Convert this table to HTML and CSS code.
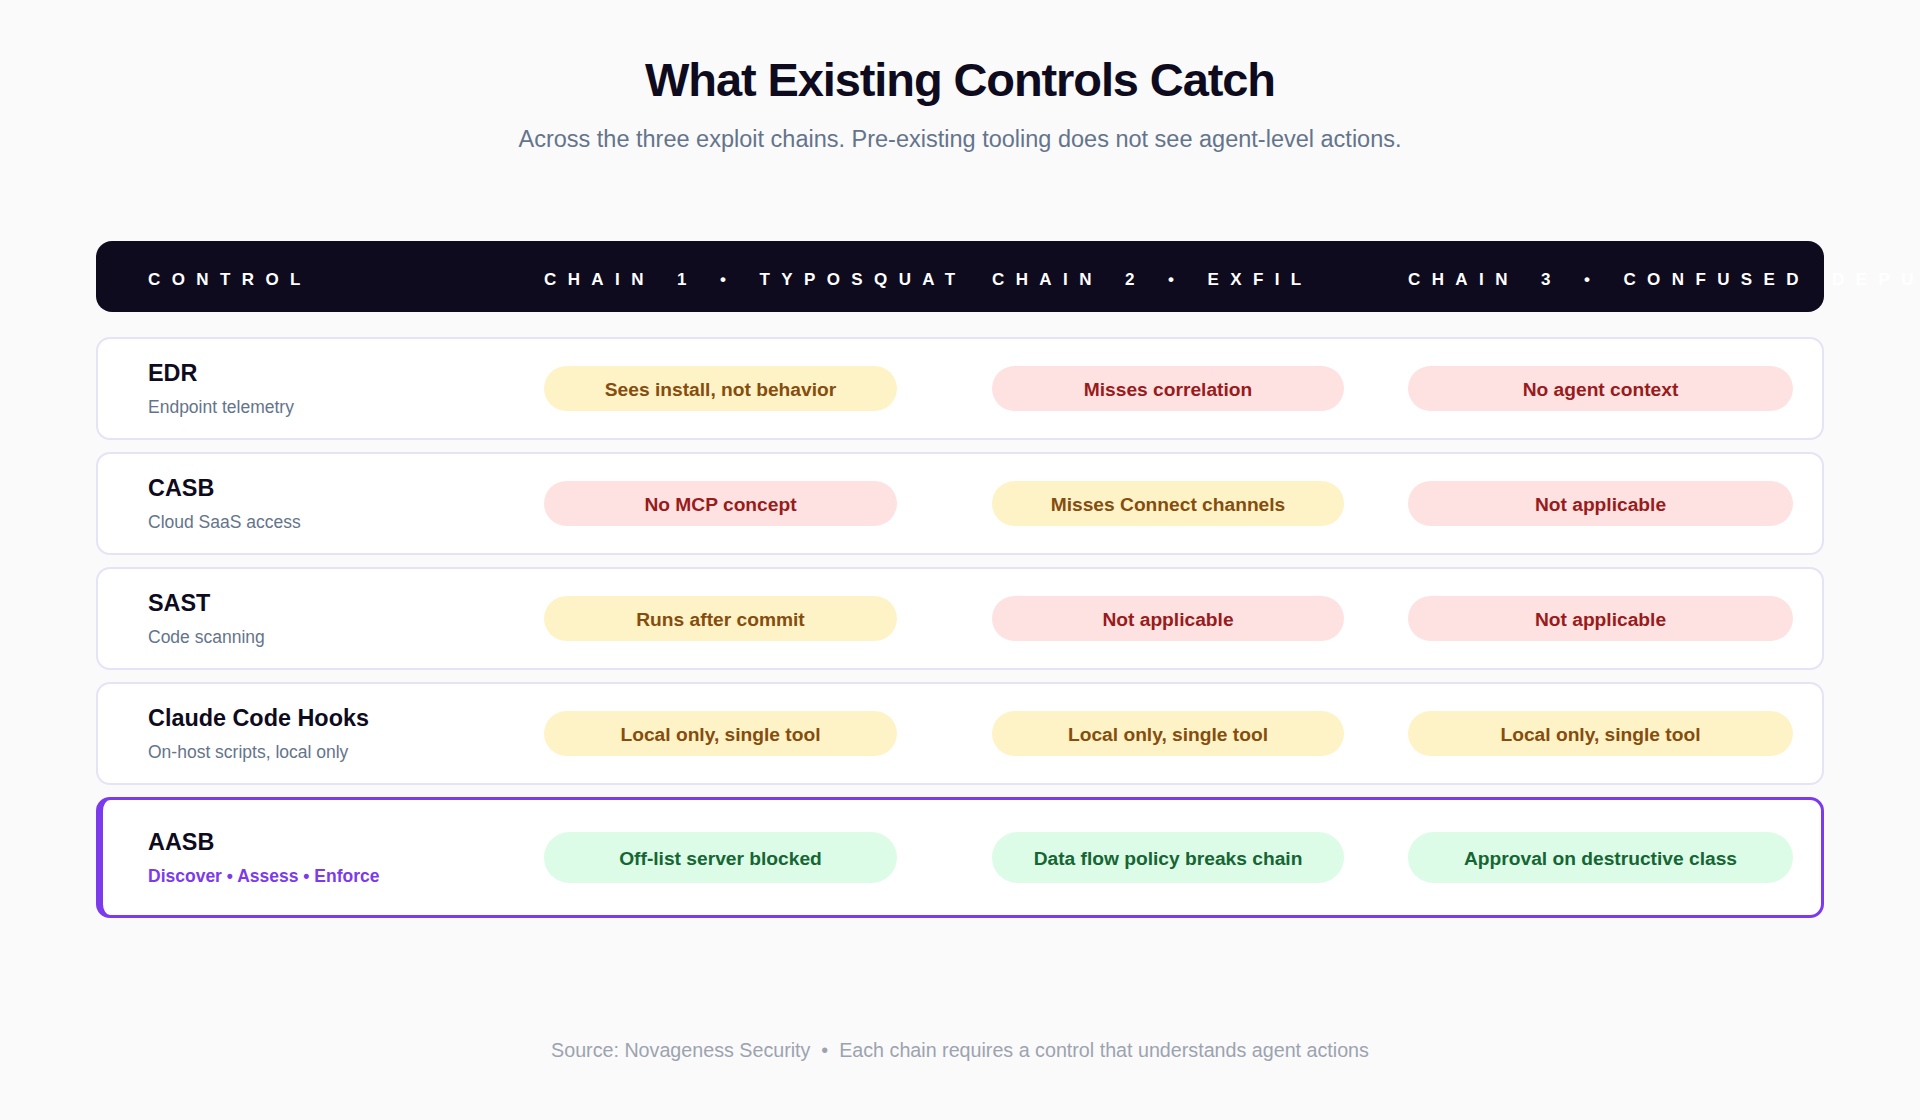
FILE: index.html
```html
<!DOCTYPE html>
<html lang="en">
<head>
<meta charset="utf-8">
<title>What Existing Controls Catch</title>
<link rel="stylesheet" href="styles.css">
</head>
<body>
<main class="page">
  <header class="intro">
    <h1 class="title">What Existing Controls Catch</h1>
    <p class="subtitle">Across the three exploit chains. Pre-existing tooling does not see agent-level actions.</p>
  </header>

  <section class="matrix">
    <div class="head grid">
      <div class="hcell">CONTROL</div>
      <div class="hcell hchain">CHAIN 1 &bull; TYPOSQUAT</div>
      <div class="hcell hchain">CHAIN 2 &bull; EXFIL</div>
      <div class="hcell hchain">CHAIN 3 &bull; CONFUSED DEPUTY</div>
    </div>

    <div class="row grid">
      <div class="ctrl"><div class="name">EDR</div><div class="desc">Endpoint telemetry</div></div>
      <div class="cell c1"><span class="pill warn">Sees install, not behavior</span></div>
      <div class="cell"><span class="pill miss">Misses correlation</span></div>
      <div class="cell"><span class="pill miss">No agent context</span></div>
    </div>

    <div class="row grid">
      <div class="ctrl"><div class="name">CASB</div><div class="desc">Cloud SaaS access</div></div>
      <div class="cell c1"><span class="pill miss">No MCP concept</span></div>
      <div class="cell"><span class="pill warn">Misses Connect channels</span></div>
      <div class="cell"><span class="pill miss">Not applicable</span></div>
    </div>

    <div class="row grid">
      <div class="ctrl"><div class="name">SAST</div><div class="desc">Code scanning</div></div>
      <div class="cell c1"><span class="pill warn">Runs after commit</span></div>
      <div class="cell"><span class="pill miss">Not applicable</span></div>
      <div class="cell"><span class="pill miss">Not applicable</span></div>
    </div>

    <div class="row grid">
      <div class="ctrl"><div class="name">Claude Code Hooks</div><div class="desc">On-host scripts, local only</div></div>
      <div class="cell c1"><span class="pill warn">Local only, single tool</span></div>
      <div class="cell"><span class="pill warn">Local only, single tool</span></div>
      <div class="cell"><span class="pill warn">Local only, single tool</span></div>
    </div>

    <div class="row grid row-hi">
      <div class="ctrl"><div class="name">AASB</div><div class="desc desc-hi">Discover &bull; Assess &bull; Enforce</div></div>
      <div class="cell c1"><span class="pill ok">Off-list server blocked</span></div>
      <div class="cell"><span class="pill ok">Data flow policy breaks chain</span></div>
      <div class="cell"><span class="pill ok">Approval on destructive class</span></div>
    </div>
  </section>

  <footer class="foot">Source: Novageness Security &nbsp;&bull;&nbsp; Each chain requires a control that understands agent actions</footer>
</main>
</body>
</html>
```

FILE: styles.css
```css
* { box-sizing: border-box; }

html, body {
  margin: 0;
  padding: 0;
  background: #fafafb;
}

body {
  font-family: "Liberation Sans", Arial, sans-serif;
  color: #0f0b1e;
  overflow: hidden;
}

.page {
  width: 1920px;
  height: 1120px;
  padding: 51px 96px 0;
  display: flex;
  flex-direction: column;
}

.intro {
  display: flex;
  flex-direction: column;
  align-items: center;
  gap: 15px;
}

.title {
  margin: 0;
  font-size: 47px;
  line-height: 58px;
  font-weight: 700;
  letter-spacing: -1.1px;
  color: #0f0b1e;
}

.subtitle {
  margin: 0;
  font-size: 23.5px;
  line-height: 30px;
  color: #64748b;
}

.matrix {
  margin-top: 87px;
  display: flex;
  flex-direction: column;
  gap: 12px;
}

.grid {
  display: grid;
  grid-template-columns: 332px 384px 352px 385px;
  column-gap: 64px;
  align-items: center;
  padding-left: 52px;
}

.head {
  height: 71px;
  background: #0f0b1e;
  border-radius: 16px;
  margin-bottom: 13px;
  padding-top: 6px;
}

.hcell {
  color: #ffffff;
  font-size: 17px;
  font-weight: 700;
  letter-spacing: 11.4px;
  white-space: nowrap;
}

.hchain {
  word-spacing: 6px;
}

.row {
  height: 103px;
  background: #ffffff;
  border: 2px solid #e5e3f6;
  border-radius: 14px;
  padding-left: 50px;
}

.row-hi {
  height: 121px;
  border: 3px solid #7c3aed;
  border-left-width: 7px;
  padding-left: 45px;
}

.ctrl {
  display: flex;
  flex-direction: column;
  gap: 10px;
}

.name {
  font-size: 23.4px;
  line-height: 27px;
  font-weight: 700;
  color: #0f0b1e;
}

.desc {
  font-size: 17.5px;
  line-height: 20px;
  color: #64748b;
}

.desc-hi {
  color: #7c3aed;
  font-weight: 700;
  font-size: 17.5px;
}

.cell {
  display: flex;
}

.pill {
  flex: 1;
  height: 45px;
  padding-top: 2px;
  border-radius: 999px;
  display: flex;
  align-items: center;
  justify-content: center;
  font-size: 19.2px;
  font-weight: 700;
  white-space: nowrap;
}

.c1 .pill {
  flex: 0 0 353px;
}

.row-hi .pill {
  height: 51px;
}

.warn { background: #fef3c7; color: #854d0e; }
.miss { background: #fee2e2; color: #991b1b; }
.ok   { background: #dcfce7; color: #166534; }

.foot {
  margin-top: 120px;
  text-align: center;
  font-size: 19.7px;
  line-height: 24px;
  color: #9ca3af;
}
```
